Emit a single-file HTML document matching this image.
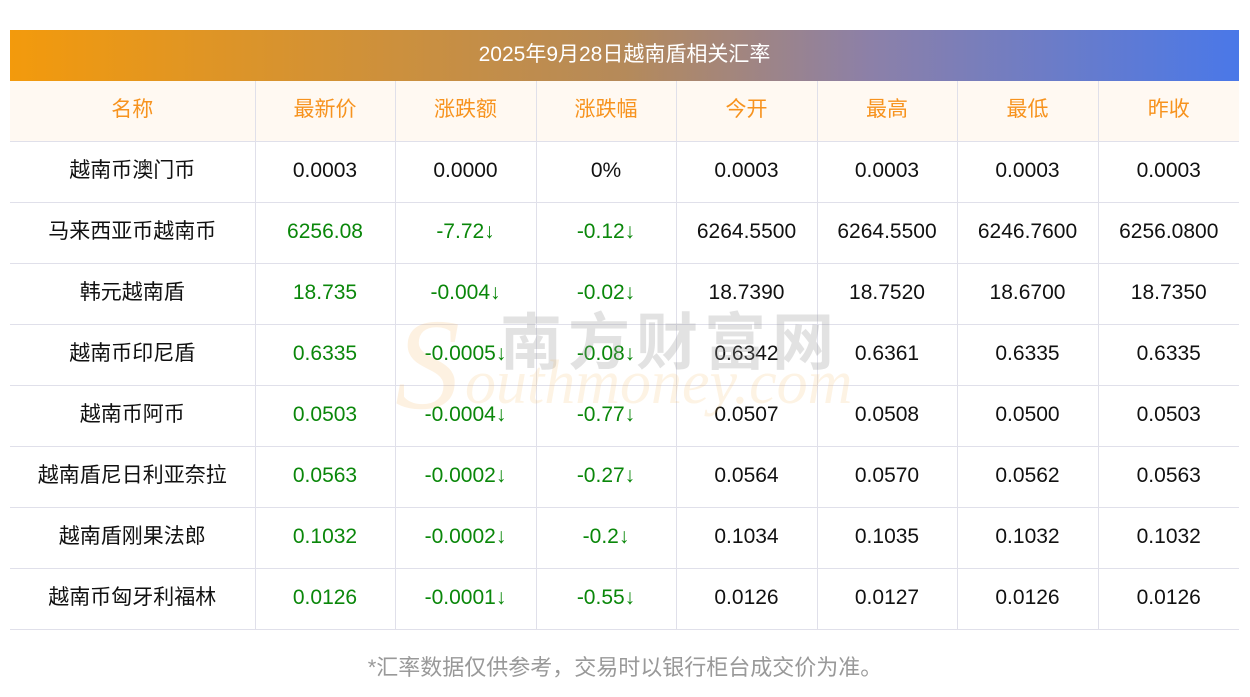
<!DOCTYPE html>
<html><head><meta charset="utf-8"><style>
body{margin:0;width:1250px;height:697px;background:#fff;font-family:"Liberation Sans","Noto Sans CJK SC",sans-serif;position:relative;overflow:hidden}
.bar{position:absolute;left:10px;top:30px;width:1229px;height:51px;background:linear-gradient(90deg,#f39a0c,#b58a5a 50%,#8c80a8 70%,#4a78e8);color:#fff;font-size:21px;line-height:49px;text-align:center}
table{position:absolute;left:10px;top:81px;border-collapse:collapse;table-layout:fixed;width:1229px}
td{height:58px;border:1px solid #e0e0ea;text-align:center;font-size:21px;line-height:24px;color:#111;padding:0 0 2px 0;overflow:hidden}
tr td:first-child{border-left:none}
tr td:last-child{border-right:none}
tr:first-child td{border-top:none;background:#fff9f2;color:#f7931e}
.g{color:#0a870a}
.wm{position:absolute;z-index:2;pointer-events:none}
.foot{position:absolute;top:650px;left:0;width:1250px;text-align:center;color:#999;font-size:22px}
</style></head><body>
<div class="bar">2025年9月28日越南盾相关汇率</div>
<table>
<colgroup><col style="width:245px"><col style="width:140px"><col style="width:141px"><col style="width:140px"><col style="width:141px"><col style="width:140px"><col style="width:141px"><col style="width:141px"></colgroup>
<tr><td>名称</td><td>最新价</td><td>涨跌额</td><td>涨跌幅</td><td>今开</td><td>最高</td><td>最低</td><td>昨收</td></tr>
<tr><td>越南币澳门币</td><td>0.0003</td><td>0.0000</td><td>0%</td><td>0.0003</td><td>0.0003</td><td>0.0003</td><td>0.0003</td></tr>
<tr><td>马来西亚币越南币</td><td class="g">6256.08</td><td class="g">-7.72↓</td><td class="g">-0.12↓</td><td>6264.5500</td><td>6264.5500</td><td>6246.7600</td><td>6256.0800</td></tr>
<tr><td>韩元越南盾</td><td class="g">18.735</td><td class="g">-0.004↓</td><td class="g">-0.02↓</td><td>18.7390</td><td>18.7520</td><td>18.6700</td><td>18.7350</td></tr>
<tr><td>越南币印尼盾</td><td class="g">0.6335</td><td class="g">-0.0005↓</td><td class="g">-0.08↓</td><td>0.6342</td><td>0.6361</td><td>0.6335</td><td>0.6335</td></tr>
<tr><td>越南币阿币</td><td class="g">0.0503</td><td class="g">-0.0004↓</td><td class="g">-0.77↓</td><td>0.0507</td><td>0.0508</td><td>0.0500</td><td>0.0503</td></tr>
<tr><td>越南盾尼日利亚奈拉</td><td class="g">0.0563</td><td class="g">-0.0002↓</td><td class="g">-0.27↓</td><td>0.0564</td><td>0.0570</td><td>0.0562</td><td>0.0563</td></tr>
<tr><td>越南盾刚果法郎</td><td class="g">0.1032</td><td class="g">-0.0002↓</td><td class="g">-0.2↓</td><td>0.1034</td><td>0.1035</td><td>0.1032</td><td>0.1032</td></tr>
<tr><td>越南币匈牙利福林</td><td class="g">0.0126</td><td class="g">-0.0001↓</td><td class="g">-0.55↓</td><td>0.0126</td><td>0.0127</td><td>0.0126</td><td>0.0126</td></tr>
</table>
<div class="wm" style="left:500px;top:292px;font-size:62px;color:rgba(150,150,150,0.28);letter-spacing:6px;font-weight:bold">南方财富网</div>
<div class="wm" style="left:395px;top:290px;font-size:130px;font-style:italic;font-family:'Liberation Serif',serif;color:rgba(245,180,90,0.18)">S</div>
<div class="wm" style="left:465px;top:348px;font-size:62px;font-style:italic;font-family:'Liberation Serif',serif;color:rgba(245,180,90,0.16)">outhmoney.com</div>
<div class="foot">*汇率数据仅供参考，交易时以银行柜台成交价为准。</div>
</body></html>
